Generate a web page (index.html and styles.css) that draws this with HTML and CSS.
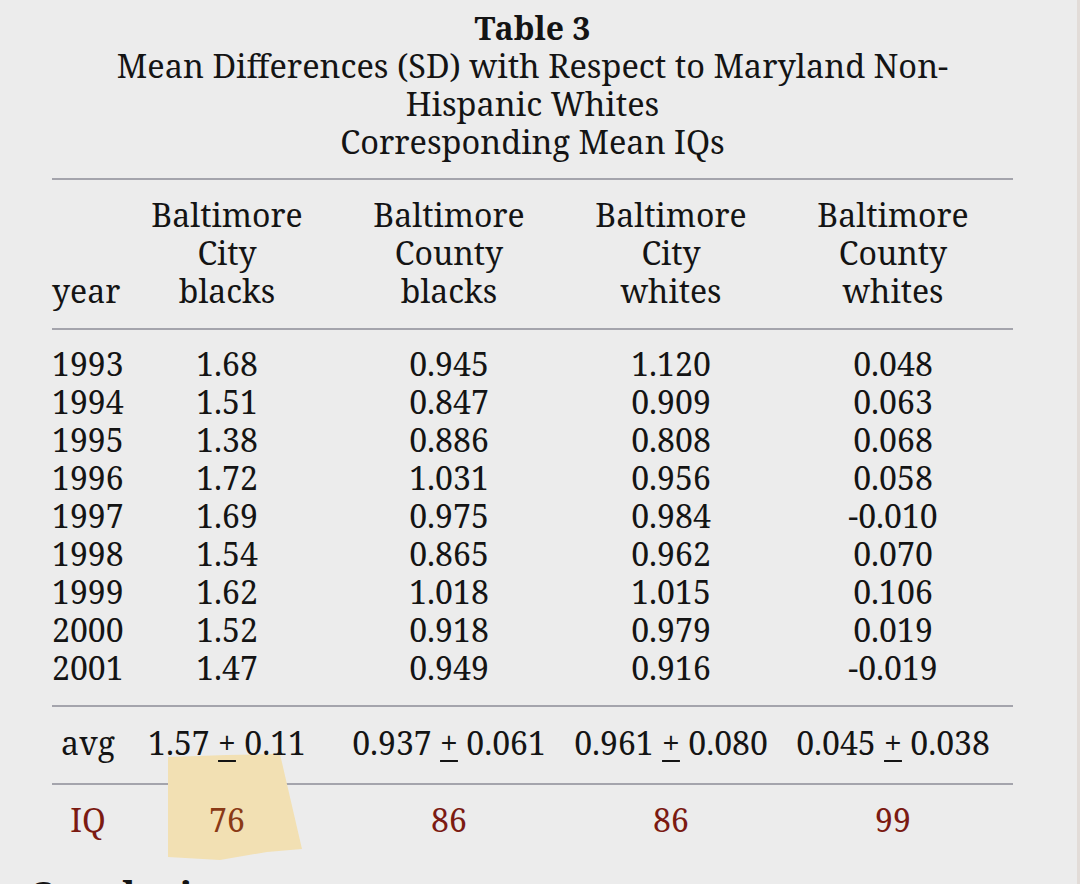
FILE: index.html
```html
<!DOCTYPE html>
<html lang="en">
<head>
<meta charset="utf-8">
<title>Table 3</title>
<link rel="stylesheet" href="styles.css">
</head>
<body>
<div class="page">
  <div class="doc">
    <div class="caption">
      <div class="cap-title">Table 3</div>
      <div class="cap-sub">Mean Differences (SD) with Respect to Maryland Non-<br>Hispanic Whites</div>
      <div class="cap-sub">Corresponding Mean IQs</div>
    </div>

    <div class="table">
      <div class="rule"></div>
      <div class="grid head">
        <div class="c0 year">year</div>
        <div class="cell">Baltimore<br>City<br>blacks</div>
        <div class="cell">Baltimore<br>County<br>blacks</div>
        <div class="cell">Baltimore<br>City<br>whites</div>
        <div class="cell">Baltimore<br>County<br>whites</div>
      </div>
      <div class="rule"></div>
      <div class="grid body">
        <div class="c0">1993</div><div class="cell">1.68</div><div class="cell">0.945</div><div class="cell">1.120</div><div class="cell">0.048</div>
        <div class="c0">1994</div><div class="cell">1.51</div><div class="cell">0.847</div><div class="cell">0.909</div><div class="cell">0.063</div>
        <div class="c0">1995</div><div class="cell">1.38</div><div class="cell">0.886</div><div class="cell">0.808</div><div class="cell">0.068</div>
        <div class="c0">1996</div><div class="cell">1.72</div><div class="cell">1.031</div><div class="cell">0.956</div><div class="cell">0.058</div>
        <div class="c0">1997</div><div class="cell">1.69</div><div class="cell">0.975</div><div class="cell">0.984</div><div class="cell">-0.010</div>
        <div class="c0">1998</div><div class="cell">1.54</div><div class="cell">0.865</div><div class="cell">0.962</div><div class="cell">0.070</div>
        <div class="c0">1999</div><div class="cell">1.62</div><div class="cell">1.018</div><div class="cell">1.015</div><div class="cell">0.106</div>
        <div class="c0">2000</div><div class="cell">1.52</div><div class="cell">0.918</div><div class="cell">0.979</div><div class="cell">0.019</div>
        <div class="c0">2001</div><div class="cell">1.47</div><div class="cell">0.949</div><div class="cell">0.916</div><div class="cell">-0.019</div>
      </div>
      <div class="rule"></div>
      <div class="grid avg">
        <div class="c0 label">avg</div>
        <div class="cell">1.57 <span class="pm">+</span> 0.11</div>
        <div class="cell">0.937 <span class="pm">+</span> 0.061</div>
        <div class="cell">0.961 <span class="pm">+</span> 0.080</div>
        <div class="cell">0.045 <span class="pm">+</span> 0.038</div>
      </div>
      <div class="rule"></div>
      <div class="grid iq">
        <div class="c0 label">IQ</div>
        <div class="cell marked">76</div>
        <div class="cell">86</div>
        <div class="cell">86</div>
        <div class="cell">99</div>
      </div>
      <svg class="highlight" width="140" height="110" viewBox="0 0 140 110" aria-hidden="true">
        <polygon points="1,3 60,1 113,0 135,95 100,98 53,106 1,103" fill="#f2e0b3"/>
      </svg>
    </div>

    <h2 class="section">Conclusions</h2>
  </div>
</div>
</body>
</html>
```

FILE: styles.css
```css
html {
  background: #e2dcd8;
}

body {
  margin: 0;
  font-family: "Noto Serif", "DejaVu Serif Condensed", "DejaVu Serif", serif;
  color: #141414;
}

.page {
  width: 1077px;
  height: 884px;
  overflow: hidden;
  background: #ececec;
}

.doc {
  padding-top: 9px;
}

.caption {
  width: 961px;
  margin-left: 52px;
  text-align: center;
  font-size: 32px;
  line-height: 38px;
}

.cap-title {
  font-weight: 700;
}

.cap-sub {
  font-size: 32.5px;
}

.table {
  position: relative;
  width: 961px;
  margin-left: 52px;
  margin-top: 17px;
  font-size: 32px;
  line-height: 38px;
}

.rule {
  height: 2px;
  background: #a4a4ac;
}

.grid {
  position: relative;
  z-index: 1;
  display: grid;
  grid-template-columns: 72px 214px repeat(3, 222px);
}

.c0 {
  white-space: nowrap;
}

.cell {
  text-align: center;
  white-space: nowrap;
}

.grid > .c0 + .cell {
  padding-right: 8px;
}

.head {
  padding: 16px 0 18px;
}

.head .year {
  align-self: end;
}

.body {
  padding: 15px 0 18px;
}

.avg {
  padding: 17px 0 21px;
}

.iq {
  padding: 16px 0 0;
  color: #7b1a12;
}

.label {
  text-align: center;
}

.pm {
  text-decoration: underline;
  text-decoration-thickness: 2px;
  text-underline-offset: 5px;
}

.marked {
  color: #8a3a16;
}

.highlight {
  position: absolute;
  left: 115px;
  top: 576px;
  z-index: 0;
}

.section {
  margin: 33px 0 0 28px;
  font-size: 38px;
  line-height: 44px;
  font-weight: 700;
}
```
